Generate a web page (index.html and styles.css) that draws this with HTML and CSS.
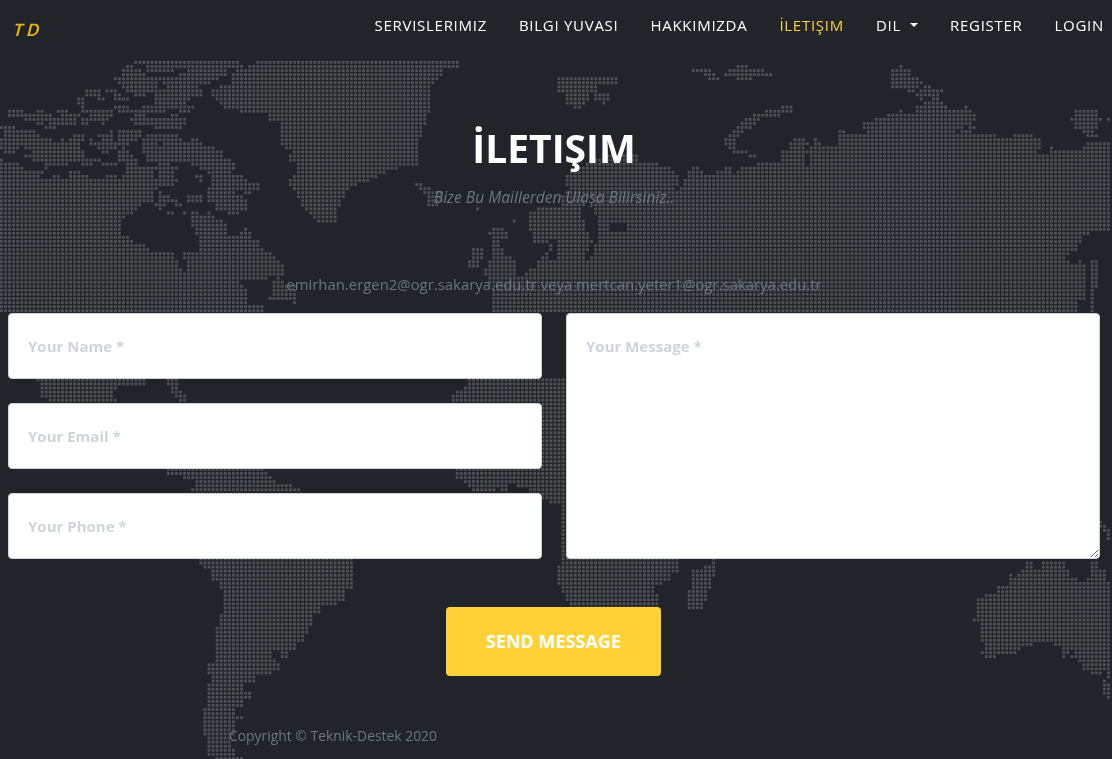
FILE: index.html
```html
<!DOCTYPE html>
<html lang="tr">
<head>
<meta charset="utf-8">
<title>Teknik Destek - İletişim</title>
<link rel="stylesheet" href="styles.css">
</head>
<body>
<canvas class="world-map" id="worldMap" width="1112" height="759" aria-hidden="true"></canvas>
<header class="site-nav">
  <a class="brand" href="#">TD</a>
  <nav class="nav-links">
    <a class="nav-link" href="#">SERVISLERIMIZ</a>
    <a class="nav-link" href="#">BILGI YUVASI</a>
    <a class="nav-link" href="#">HAKKIMIZDA</a>
    <a class="nav-link is-active" href="#">İLETIŞIM</a>
    <a class="nav-link" href="#">DIL<span class="caret"></span></a>
    <a class="nav-link" href="#">REGISTER</a>
    <a class="nav-link" href="#">LOGIN</a>
  </nav>
</header>
<main class="contact">
  <h2 class="contact-title">İLETIŞIM</h2>
  <h3 class="contact-sub">Bize Bu Maillerden Ulaşa Bilirsiniz..</h3>
  <p class="contact-mails">emirhan.ergen2@ogr.sakarya.edu.tr veya mertcan.yeter1@ogr.sakarya.edu.tr</p>
  <form class="contact-form">
    <div class="field-col">
      <input class="field" type="text" placeholder="Your Name *">
      <input class="field" type="email" placeholder="Your Email *">
      <input class="field" type="tel" placeholder="Your Phone *">
    </div>
    <textarea class="field field-message" placeholder="Your Message *"></textarea>
    <button class="send-btn" type="button">SEND MESSAGE</button>
  </form>
</main>
<footer class="site-footer">Copyright © Teknik-Destek 2020</footer>
<script src="map.js"></script>
</body>
</html>
```
FILE: styles.css
```css
* { box-sizing: border-box; }
html, body { height: 100%; }
body {
  margin: 0;
  overflow: hidden;
  background: #212529;
  font-family: "Open Sans", "Noto Sans", sans-serif;
  color: #fff;
  position: relative;
}
.world-map {
  position: absolute;
  left: 0;
  top: 0;
  display: block;
}
.site-nav, .contact, .site-footer { position: relative; }
.site-nav {
  height: 52px;
  display: flex;
  align-items: center;
  justify-content: space-between;
  padding: 0 8px 0 14px;
}
.brand {
  color: #e4b412;
  font-family: "Lato", sans-serif;
  font-style: italic;
  font-weight: 700;
  font-size: 17px;
  letter-spacing: 4px;
  text-decoration: none;
  transform: translateY(3px) skewX(-8deg);
}
.nav-links { display: flex; gap: 32px; margin-bottom: 2px; }
.nav-link {
  color: #fff;
  font-size: 15px;
  line-height: 21px;
  letter-spacing: 0.72px;
  text-decoration: none;
  display: flex;
  align-items: center;
}
.nav-link.is-active { color: #fed136; }
.caret {
  width: 0;
  height: 0;
  margin-left: 9px;
  border-left: 4.5px solid transparent;
  border-right: 4.5px solid transparent;
  border-top: 4.5px solid #fff;
}
.contact {
  padding: 72px 12px 0 8px;
  text-align: center;
}
.contact-title {
  margin: 0 0 13px;
  font-size: 39px;
  line-height: 48px;
  font-weight: 700;
}
.contact-sub {
  margin: 0 0 63px;
  font-size: 15.6px;
  line-height: 24px;
  font-style: italic;
  font-weight: 400;
  color: #6c757d;
}
.contact-mails {
  margin: 0 0 17px;
  font-size: 14.9px;
  line-height: 24px;
  color: #6c757d;
}
.contact-form {
  display: grid;
  grid-template-columns: 534px 534px;
  column-gap: 24px;
}
.field-col {
  display: flex;
  flex-direction: column;
  gap: 24px;
}
.field {
  display: block;
  width: 100%;
  height: 66px;
  padding: 20px 19px;
  border: 1px solid #ced4da;
  border-radius: 4px;
  background: #fff;
  color: #495057;
  font-family: "Open Sans", sans-serif;
  font-size: 15px;
  line-height: 24px;
  font-weight: 700;
  outline: none;
}
.field::placeholder { color: #ced4da; opacity: 1; }
.field-message { height: 246px; }
.send-btn {
  grid-column: 1 / -1;
  justify-self: center;
  width: 215px;
  height: 69px;
  margin: 48px 1px 0 0;
  padding: 0 0 2px;
  border: 0;
  border-radius: 4px;
  background: #fed136;
  color: #fff;
  font-family: "Open Sans", sans-serif;
  font-size: 18px;
  font-weight: 700;
}
.site-footer {
  margin-top: 49px;
  padding-left: 229px;
  font-size: 13.9px;
  line-height: 21px;
  color: #6c757d;
}
```
FILE: map.js
```js
// Dotted world map behind the page. Each block lists rows of [y, x1, x2, x3, x4, ...]:
// land runs that hold from that y down to the next row.
var blocks = [
  [[61,135,240],[65,127,135,147,243],[69,122,140,147,175,187,227],[73,120,147,177,227],[77,115,220],[82,118,158,163,212],[85,122,158,167,200],[89,86,102,107,118,127,203],[93,83,100,112,122,135,145,155,203],[98,78,85,98,105,115,130,140,143,152,192],[102,78,85,140,143,155,187],[106,82,84,115,128,143,195],[110,8,25,30,32,37,45,58,68,82,113,118,167,180,192],[114,8,52,62,80,90,113,135,147,172,180],[118,25,77,82,110,130,187],[122,37,45,50,77,82,90,102,105,132,185],[127,0,15,45,57,152,183],[131,5,37,110,113,118,142],[135,5,40,73,85,98,113,118,142,147,178],[139,0,52,62,65,70,85,90,92,100,113,118,138,143,182,192,198],[143,0,80,90,128,143,158,163,203],[147,0,20,25,80,98,118,122,127,143,215],[151,5,15,32,85,102,110,118,130,143,223],[155,25,85,118,135,147,223],[159,0,3,33,100,118,137,147,232],[163,0,20,45,68,82,93,102,117,127,137,160,170,192,235],[167,0,23,45,48,127,178,200,235],[172,0,45,67,80,127,153,160,175,208,232],[176,0,40,53,62,68,88,107,118,122,153,160,175,195,203,212,243],[180,0,178,197,203,212,248],[183,0,175,212,260],[187,0,157,208,260],[192,0,153,160,162,208,235,245,252],[196,0,155,160,170,188,203,208,243,250,252],[200,0,153,160,178,188,203,208,248],[203,0,142,155,167,175,183,217,248],[207,0,137,160,162,217,248],[212,0,133,168,175,184,186,192,200,208,210,228,240],[216,0,126,192,215],[220,0,122,192,225],[224,0,122,192,228],[228,0,122,193,228,245,247],[232,0,122,193,228,240,250],[236,0,130,197,253],[240,0,135,197,258],[244,0,145,200,260],[248,0,150,197,265],[252,0,158,196,270],[255,0,175,183,273],[259,0,175,184,275],[263,0,177,185,279],[267,0,178,186,283],[271,0,181,187,285],[275,0,185,187,285],[279,0,270,278,280],[283,0,238,272,285],[287,0,245,272,295],[291,0,247,272,297],[299,0,247,270,297],[303,0,248,292,297],[307,0,263],[311,0,265],[315]],
  [[379,37,146,165,178],[383,39,145,167,177],[387,42,117,170,177],[391,41,113,170,183],[395,41,113,176,186],[399,50,117,177,188],[403]],
  [[469,167,262],[473,167,270],[476,181,273],[480,195,277],[484,195,294],[489,191,301],[495]],
  [[560,200,353],[568,203,353],[573,213,353],[582,220,353],[590,223,345],[602,223,337],[607,223,320],[615,220,313],[627,217,308],[635,217,305],[643,217,297],[651,215,273,282,288],[660,215,277],[663,208,280],[672,208,272],[677,210,255],[685,208,243],[693,208,252],[703,208,243],[708,203,235],[717,203,243],[723,203,235],[740,205,230],[750,208,235],[757,217,243],[765]],
  [[379,468,600],[387,463,600],[391,455,600],[395,453,600],[399,450,600],[469,457,600],[480,465,600],[484,468,507,518,600],[489,472,496,500,507,528,600],[493,530,600],[500,550,600],[505,560,600],[560]],
  [[560,562,678],[568,558,678],[575,558,672],[582,558,662],[588,562,655],[597,567,658],[605,570,658],[610]],
  [[560,713,716],[566,703,716],[571,693,716],[581,693,712],[591,688,708],[605,688,703],[610,688,700],[613]],
  [[561,1042,1070,1092,1100],[565,1025,1033,1042,1067,1092,1100],[570,1022,1070,1092,1107],[574,1010,1013,1017,1070,1092,1107],[578,1010,1077,1087,1107],[582,1010,1112],[589,997,1112],[594,985,1112],[598,977,1112],[618,973,1112],[622,977,1112],[626,981,1112],[643,985,1033,1055,1112],[647,985,1022,1062,1112],[651,981,1017,1062,1070,1075,1112],[655,985,997,1062,1066,1071,1112],[659,1078,1112],[663,1083,1112],[672,1091,1103,1107,1112],[676,1107,1112],[680],[683,1103,1107],[687,1103,1112],[696,1107,1112],[700]],
  [[523,1100,1104],[527,1100,1108],[531,1103,1112],[535,1105,1112],[539,1108,1112],[543]],
  [[65,900,902],[69,892,910],[73,889,910],[78,892,919],[82,889,922],[86,892,919,924,930],[89,907,915,920,944],[93,917,939],[98,920,924,932,939],[102,924,944],[106,782,792,917,947,965,968],[110,765,792,900,902,915,972],[114,753,780,887,975],[118,745,760,875,975],[122,742,755,863,972],[127,737,752,863,964,969,975],[131,732,745,839,845,867,955,960,972],[135,727,740,839,995,1013,1034],[139,725,737,794,805,815,817,839,1040],[143,725,735,790,808,813,820,832,834,839,1040,1087,1112],[147,727,738,790,805,810,1040,1050,1052,1084,1112],[152,733,748,782,808,810,1039,1050,1112],[156,748,757,782,807,810,1112],[160,755,757,782,807,810,1112],[163,755,807,810,1112],[170,725,732,742,1112],[173,715,732,735,1112],[178,772,1112],[232,772,1092],[237,772,1084],[242,772,1080],[247,772,1077],[252,772,1068],[257,772,1067],[262,772,1068,1077,1082,1090,1097],[267,772,1087,1090,1097],[272,772,1085,1090,1097],[277,772,1087,1090,1097],[282,772,1087,1092,1100],[292,772,1087,1092,1095],[302,772,1077,1092,1095],[313]],
  [[113,1074,1099],[118,1070,1102,1107,1112],[122,1074,1099],[130,1082,1093],[135,1087,1097],[139]],
  [[155,600,638],[160,590,640],[166,587,658],[170,572,670,692,700],[173,568,677,688,703],[178,567,678,687,772],[182,565,678,682,772],[187,568,673,680,772],[192,565,772],[197,562,772],[202,560,585,592,772],[207,537,580,595,772],[212,530,580,595,772],[217,530,582,597,772],[222,528,587,597,772],[227,528,587,597,610,627,772],[232,533,590,597,772],[242,533,550,555,592,597,772],[247,547,552,557,590,595,772],[252,543,550,555,587,595,772],[257,542,550,555,585,590,772],[262,538,772],[268,527,772],[273,485,515,525,772],[278,488,772],[285,493,772],[313]],
  [[228,493,505],[233,487,507],[238,490,508],[243,490,500],[248,472,485,492,503],[253,472,482,493,505],[258,470,482,493,512],[263,468,480,487,515],[268,485,515],[273]],
  [[183,415,422],[188,417,432],[193,422,442],[198,425,445],[203,425,440],[208,477,480],[213]],
  [[220,514,517],[224]],
  [[77,557,567,575,625],[80,555,617],[85,555,597],[90,558,597],[93,567,588,595,608],[102,567,587,603,607],[106,575,582],[110]],
  [[65,737,750],[69,692,712,728,765],[73,702,717,725,773],[78,708,720,737,752],[82]]
];

var greenland = [460,61,460,66,444,70,439,78,432,85,432,105,425,125,420,140,420,155,417,165,400,168,385,172,378,176,370,180,352,187,345,195,342,205,335,212,337,220,333,225,327,225,315,220,310,212,300,205,298,195,290,187,290,180,298,172,298,165,290,162,290,155,293,150,282,147,282,125,270,120,265,113,224,110,220,105,212,98,213,90,232,82,232,75,240,68,257,65,257,61];

var canvas = document.getElementById("worldMap");
var ctx = canvas.getContext("2d");
var land = new Path2D();

blocks.forEach(function (rows) {
  for (var r = 0; r < rows.length - 1; r++) {
    var row = rows[r];
    for (var i = 1; i < row.length; i += 2) {
      land.rect(row[i], row[0] - 2, row[i + 1] - row[i], rows[r + 1][0] - row[0]);
    }
  }
});
land.moveTo(greenland[0], greenland[1]);
for (var g = 2; g < greenland.length; g += 2) land.lineTo(greenland[g], greenland[g + 1]);
land.closePath();

var PITCH = 4.07;
ctx.fillStyle = "#4e5053";
for (var y = 61; y < 759; y += PITCH) {
  for (var x = 0; x < 1112; x += PITCH) {
    if (ctx.isPointInPath(land, x + 1.4, y + 1.4)) ctx.fillRect(x, y, 2.8, 2.8);
  }
}
```
